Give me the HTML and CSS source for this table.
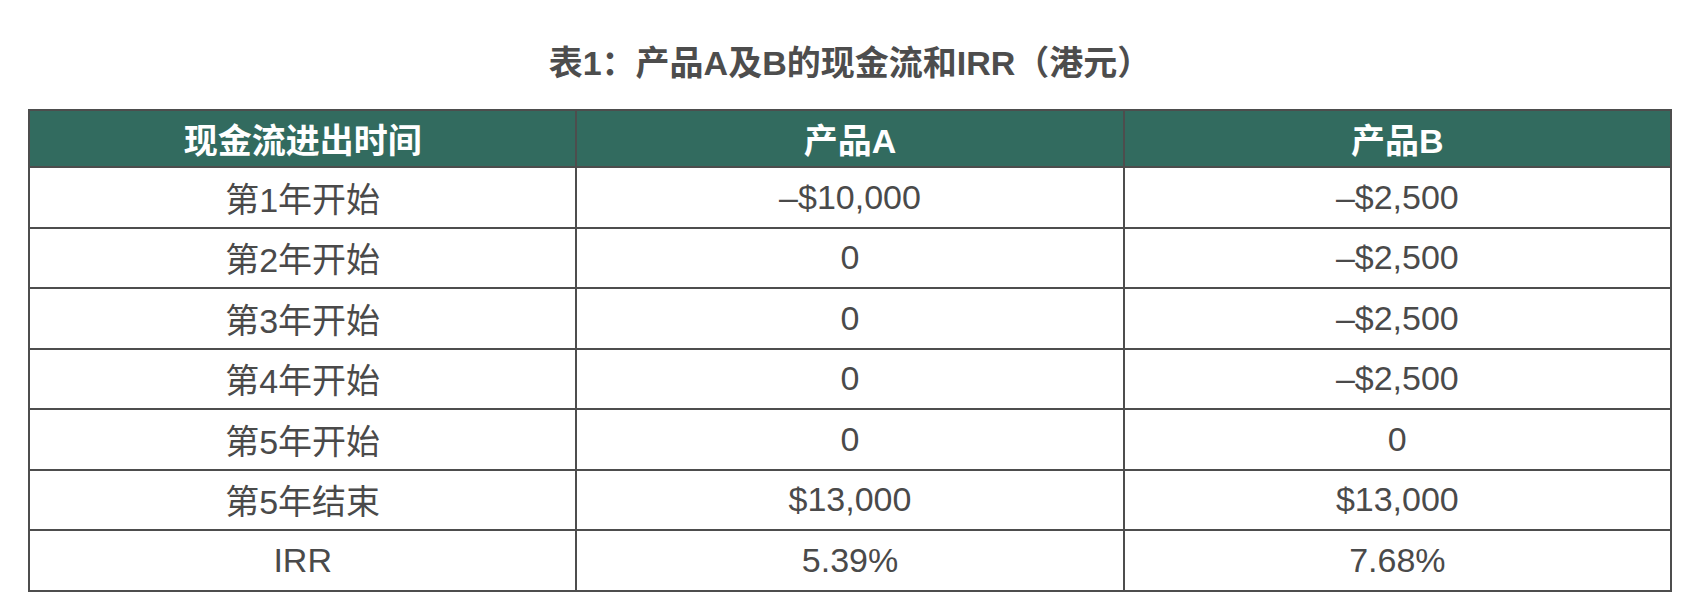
FILE: index.html
```html
<!DOCTYPE html>
<html lang="zh-Hans">
<head>
<meta charset="utf-8">
<title>表1：产品A及B的现金流和IRR（港元）</title>
<link rel="stylesheet" href="styles.css">
</head>
<body>
<main class="page">
  <h1 class="caption">表1：产品A及B的现金流和IRR（港元）</h1>
  <table class="cashflow">
    <thead>
      <tr><th>现金流进出时间</th><th>产品A</th><th>产品B</th></tr>
    </thead>
    <tbody>
      <tr><td>第1年开始</td><td>–$10,000</td><td>–$2,500</td></tr>
      <tr><td>第2年开始</td><td>0</td><td>–$2,500</td></tr>
      <tr><td>第3年开始</td><td>0</td><td>–$2,500</td></tr>
      <tr><td>第4年开始</td><td>0</td><td>–$2,500</td></tr>
      <tr><td>第5年开始</td><td>0</td><td>0</td></tr>
      <tr><td>第5年结束</td><td>$13,000</td><td>$13,000</td></tr>
      <tr><td>IRR</td><td>5.39%</td><td>7.68%</td></tr>
    </tbody>
  </table>
</main>
</body>
</html>
```
FILE: styles.css
```css
html, body {
  margin: 0;
  padding: 0;
  background: #ffffff;
}

.page {
  width: 1644px;
  padding: 43px 0 0 28px;
  font-family: "Liberation Sans", "Noto Sans CJK SC", sans-serif;
  color: #4a4a4a;
}

.caption {
  margin: 0 0 26px 0;
  font-size: 34px;
  line-height: 40px;
  font-weight: bold;
  text-align: center;
  color: #4d4d4d;
}

.cashflow {
  width: 1644px;
  border-collapse: collapse;
  table-layout: fixed;
  font-size: 34px;
}

.cashflow th,
.cashflow td {
  border: 2px solid #4d4d4d;
  padding: 0;
  text-align: center;
  vertical-align: middle;
}

.cashflow th {
  height: 55px;
  background: #326b5f;
  color: #ffffff;
  font-weight: bold;
}

.cashflow td {
  height: 58.5px;
  color: #4a4a4a;
}
```
